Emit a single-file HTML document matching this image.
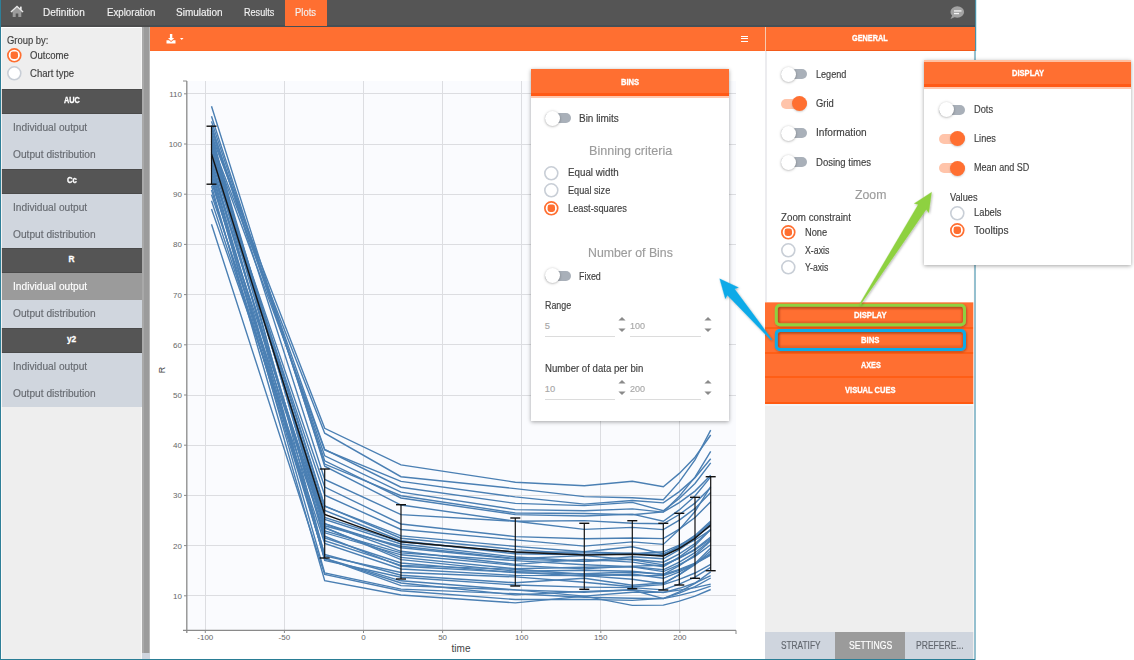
<!DOCTYPE html>
<html><head><meta charset="utf-8"><style>
html,body{margin:0;padding:0;width:1134px;height:660px;overflow:hidden;background:#fff;font-family:"Liberation Sans", sans-serif;}
.r{position:absolute;}
.t{position:absolute;white-space:nowrap;line-height:20px;height:20px;-webkit-text-stroke:0.15px currentColor;}
svg text{font-family:"Liberation Sans",sans-serif;}
</style></head><body>
<div class="r" style="left:0px;top:0px;width:975px;height:660px;background:#fff;"></div>
<div class="r" style="left:0px;top:0px;width:975px;height:27px;background:#555555;"></div>
<div class="r" style="left:0px;top:25px;width:975px;height:2px;background:#4b4c4d;"></div>
<div class="r" style="left:766px;top:25px;width:209px;height:2px;background:#454f55;"></div>
<div class="r" style="left:150px;top:25px;width:615px;height:2px;background:#454f55;"></div>
<div class="r" style="left:285px;top:0px;width:42px;height:26px;background:#ff6f31;"></div>
<svg class="r" style="left:10px;top:5px" width="14" height="13" viewBox="0 0 14 13"><path d="M1.3 7.2 L7 2 L12.7 7.2 L11.3 7.2 L11.3 12 L8.3 12 L8.3 8.6 L5.7 8.6 L5.7 12 L2.7 12 L2.7 7.2 Z" fill="#9c9c9c"/><path d="M0.9 7 L7 1.4 L13.1 7" fill="none" stroke="#e8e8e8" stroke-width="1.3"/><rect x="10" y="1.6" width="1.7" height="3.2" fill="#e8e8e8"/></svg>
<div class="t" style="left:43.40px;top:2.70px;font-size:10.4px;color:#f2f2f2;font-weight:normal;letter-spacing:0.000px;transform:scaleX(0.9641);transform-origin:0 0;">Definition</div>
<div class="t" style="left:106.50px;top:2.70px;font-size:10.4px;color:#f2f2f2;font-weight:normal;letter-spacing:0.000px;transform:scaleX(0.9321);transform-origin:0 0;">Exploration</div>
<div class="t" style="left:176.00px;top:2.70px;font-size:10.4px;color:#f2f2f2;font-weight:normal;letter-spacing:0.000px;transform:scaleX(0.9617);transform-origin:0 0;">Simulation</div>
<div class="t" style="left:243.70px;top:2.70px;font-size:10.4px;color:#f2f2f2;font-weight:normal;letter-spacing:0.000px;transform:scaleX(0.8737);transform-origin:0 0;">Results</div>
<div class="t" style="left:295.00px;top:2.70px;font-size:10.4px;color:#f2f2f2;font-weight:normal;letter-spacing:0.000px;transform:scaleX(0.9083);transform-origin:0 0;">Plots</div>
<svg class="r" style="left:948px;top:4px" width="18" height="17" viewBox="0 0 18 17"><ellipse cx="9.3" cy="8" rx="6.8" ry="5.8" fill="#a3a3a3"/><path d="M4.5 11 L2.5 15 L8 12.5 Z" fill="#a3a3a3"/><rect x="6" y="6.3" width="7.5" height="1.3" fill="#f4f4f4"/><rect x="6" y="8.9" width="5" height="1.3" fill="#f4f4f4"/></svg>
<div class="r" style="left:1px;top:27px;width:141px;height:633px;background:#eeeeee;"></div>
<div class="r" style="left:1px;top:27px;width:141px;height:1px;background:#ffffff;"></div>
<div class="r" style="left:141px;top:27px;width:1px;height:632px;background:#f6f6f6;"></div>
<div class="r" style="left:142px;top:27px;width:8px;height:626px;background:#9b9b9b;"></div>
<div class="r" style="left:142px;top:27px;width:1.5px;height:626px;background:#a9a9a9;"></div>
<div class="r" style="left:149px;top:27px;width:1px;height:626px;background:#b8b8b8;"></div>
<div class="r" style="left:142px;top:653px;width:8px;height:7px;background:#cfd5de;"></div>
<div class="t" style="left:6.80px;top:31.30px;font-size:10px;color:#404040;font-weight:normal;letter-spacing:0.000px;transform:scaleX(0.9428);transform-origin:0 0;">Group by:</div>
<svg class="r" style="left:5.70px;top:46.90px" width="16.60" height="16.60"><circle cx="8.3" cy="8.3" r="6.45" fill="#fff" stroke="#ff6f31" stroke-width="1.7"/><rect x="4.6000000000000005" y="4.6000000000000005" width="7.4" height="7.4" rx="2.4" fill="#ff6f31"/></svg>
<svg class="r" style="left:5.70px;top:64.70px" width="16.60" height="16.60"><circle cx="8.3" cy="8.3" r="6.5" fill="#fff" stroke="#c8ced6" stroke-width="1.6"/></svg>
<div class="t" style="left:30.30px;top:46.10px;font-size:10px;color:#404040;font-weight:normal;letter-spacing:0.000px;transform:scaleX(0.9539);transform-origin:0 0;">Outcome</div>
<div class="t" style="left:30.30px;top:63.90px;font-size:10px;color:#404040;font-weight:normal;letter-spacing:0.000px;transform:scaleX(0.9581);transform-origin:0 0;">Chart type</div>
<div class="r" style="left:1px;top:89.0px;width:141px;height:25px;background:#555555;"></div>
<div class="r" style="left:1px;top:89.0px;width:141px;height:1px;background:#4a4a4a;"></div>
<div class="r" style="left:1px;top:113.0px;width:141px;height:1px;background:#4a4a4a;"></div>
<div class="t" style="left:63.55px;top:90.30px;font-size:8.3px;color:#ffffff;font-weight:bold;letter-spacing:0.000px;transform:scaleX(0.8842);transform-origin:0 0;-webkit-text-stroke:0.3px currentColor;">AUC</div>
<div class="r" style="left:1px;top:114.0px;width:141px;height:27.25px;background:#d0d6de;"></div>
<div class="t" style="left:12.60px;top:118.20px;font-size:10px;color:#666a70;font-weight:normal;letter-spacing:0.000px;transform:scaleX(1.0188);transform-origin:0 0;">Individual output</div>
<div class="r" style="left:1px;top:141.25px;width:141px;height:27.25px;background:#d0d6de;"></div>
<div class="t" style="left:12.60px;top:145.45px;font-size:10px;color:#666a70;font-weight:normal;letter-spacing:0.000px;transform:scaleX(1.0190);transform-origin:0 0;">Output distribution</div>
<div class="r" style="left:1px;top:168.5px;width:141px;height:25px;background:#555555;"></div>
<div class="r" style="left:1px;top:168.5px;width:141px;height:1px;background:#4a4a4a;"></div>
<div class="r" style="left:1px;top:192.5px;width:141px;height:1px;background:#4a4a4a;"></div>
<div class="t" style="left:66.55px;top:169.80px;font-size:8.3px;color:#ffffff;font-weight:bold;letter-spacing:0.000px;transform:scaleX(0.9331);transform-origin:0 0;-webkit-text-stroke:0.3px currentColor;">Cc</div>
<div class="r" style="left:1px;top:193.5px;width:141px;height:27.25px;background:#d0d6de;"></div>
<div class="t" style="left:12.60px;top:197.70px;font-size:10px;color:#666a70;font-weight:normal;letter-spacing:0.000px;transform:scaleX(1.0188);transform-origin:0 0;">Individual output</div>
<div class="r" style="left:1px;top:220.75px;width:141px;height:27.25px;background:#d0d6de;"></div>
<div class="t" style="left:12.60px;top:224.95px;font-size:10px;color:#666a70;font-weight:normal;letter-spacing:0.000px;transform:scaleX(1.0190);transform-origin:0 0;">Output distribution</div>
<div class="r" style="left:1px;top:248.0px;width:141px;height:25px;background:#555555;"></div>
<div class="r" style="left:1px;top:248.0px;width:141px;height:1px;background:#4a4a4a;"></div>
<div class="r" style="left:1px;top:272.0px;width:141px;height:1px;background:#4a4a4a;"></div>
<div class="t" style="left:68.50px;top:249.30px;font-size:8.3px;color:#ffffff;font-weight:bold;letter-spacing:0.000px;-webkit-text-stroke:0.3px currentColor;">R</div>
<div class="r" style="left:1px;top:273.0px;width:141px;height:27.25px;background:#9b9b9b;"></div>
<div class="t" style="left:12.60px;top:277.20px;font-size:10px;color:#ffffff;font-weight:normal;letter-spacing:0.000px;transform:scaleX(1.0188);transform-origin:0 0;">Individual output</div>
<div class="r" style="left:1px;top:300.25px;width:141px;height:27.25px;background:#d0d6de;"></div>
<div class="t" style="left:12.60px;top:304.45px;font-size:10px;color:#666a70;font-weight:normal;letter-spacing:0.000px;transform:scaleX(1.0190);transform-origin:0 0;">Output distribution</div>
<div class="r" style="left:1px;top:327.5px;width:141px;height:25px;background:#555555;"></div>
<div class="r" style="left:1px;top:327.5px;width:141px;height:1px;background:#4a4a4a;"></div>
<div class="r" style="left:1px;top:351.5px;width:141px;height:1px;background:#4a4a4a;"></div>
<div class="t" style="left:66.88px;top:328.80px;font-size:8.3px;color:#ffffff;font-weight:bold;letter-spacing:0.000px;-webkit-text-stroke:0.3px currentColor;">y2</div>
<div class="r" style="left:1px;top:352.5px;width:141px;height:27.25px;background:#d0d6de;"></div>
<div class="t" style="left:12.60px;top:356.70px;font-size:10px;color:#666a70;font-weight:normal;letter-spacing:0.000px;transform:scaleX(1.0188);transform-origin:0 0;">Individual output</div>
<div class="r" style="left:1px;top:379.75px;width:141px;height:27.25px;background:#d0d6de;"></div>
<div class="t" style="left:12.60px;top:383.95px;font-size:10px;color:#666a70;font-weight:normal;letter-spacing:0.000px;transform:scaleX(1.0190);transform-origin:0 0;">Output distribution</div>
<div class="r" style="left:150px;top:27px;width:615px;height:24.5px;background:#ff6f31;"></div>
<div class="r" style="left:150px;top:50px;width:615px;height:1.5px;background:#ff6a28;"></div>
<div class="r" style="left:150px;top:51px;width:615px;height:609px;background:#ffffff;"></div>
<svg class="r" style="left:165px;top:33px" width="22" height="12" viewBox="0 0 22 12"><rect x="4.9" y="1" width="2.4" height="5" fill="#fff"/><path d="M3 5 L9.2 5 L6.1 8 Z" fill="#fff"/><path d="M1.5 7.3 L4 7.3 L6.1 9 L8.2 7.3 L10.5 7.3 L10.5 10.5 L1.5 10.5 Z" fill="#fff"/><path d="M15 5 L18.5 5 L16.75 7 Z" fill="#fff"/></svg>
<div class="r" style="left:740.9px;top:35.5px;width:7.4px;height:1.3px;background:#fff;"></div>
<div class="r" style="left:740.9px;top:38.2px;width:7.4px;height:1.3px;background:#fff;"></div>
<div class="r" style="left:740.9px;top:40.8px;width:7.4px;height:1.3px;background:#fff;"></div>
<div class="r" style="left:765px;top:27px;width:1px;height:24px;background:#f6c9b0;"></div>
<div class="r" style="left:765px;top:51px;width:210px;height:609px;background:#ffffff;"></div>
<div class="r" style="left:766px;top:27px;width:209px;height:22.5px;background:#ff6f31;"></div>
<div class="r" style="left:766px;top:49.5px;width:209px;height:1.8px;background:#f25a1a;"></div>
<div class="t" style="left:852.35px;top:28.30px;font-size:8.3px;color:#ffffff;font-weight:bold;letter-spacing:0.000px;transform:scaleX(0.8797);transform-origin:0 0;-webkit-text-stroke:0.3px currentColor;">GENERAL</div>
<div class="r" style="left:765px;top:51px;width:1.5px;height:251px;background:#ececef;"></div>
<div class="r" style="left:780.5px;top:69.4px;width:26px;height:10px;border-radius:5px;background:#a9b0b9"></div><div class="r" style="left:780.5px;top:66.9px;width:15px;height:15px;border-radius:50%;background:#fff;box-shadow:0 0.5px 2.5px rgba(0,0,0,0.35)"></div>
<div class="t" style="left:815.80px;top:64.70px;font-size:10px;color:#404040;font-weight:normal;letter-spacing:0.000px;transform:scaleX(0.9080);transform-origin:0 0;">Legend</div>
<div class="r" style="left:780.5px;top:98.8px;width:26px;height:10px;border-radius:5px;background:#ffc4aa"></div><div class="r" style="left:791.5px;top:96.3px;width:15px;height:15px;border-radius:50%;background:#ff6f31;box-shadow:0 1px 2px rgba(0,0,0,0.18)"></div>
<div class="t" style="left:815.80px;top:94.10px;font-size:10px;color:#404040;font-weight:normal;letter-spacing:0.000px;transform:scaleX(0.9369);transform-origin:0 0;">Grid</div>
<div class="r" style="left:780.5px;top:128px;width:26px;height:10px;border-radius:5px;background:#a9b0b9"></div><div class="r" style="left:780.5px;top:125.5px;width:15px;height:15px;border-radius:50%;background:#fff;box-shadow:0 0.5px 2.5px rgba(0,0,0,0.35)"></div>
<div class="t" style="left:815.80px;top:123.30px;font-size:10px;color:#404040;font-weight:normal;letter-spacing:0.000px;transform:scaleX(1.0135);transform-origin:0 0;">Information</div>
<div class="r" style="left:780.5px;top:157.3px;width:26px;height:10px;border-radius:5px;background:#a9b0b9"></div><div class="r" style="left:780.5px;top:154.8px;width:15px;height:15px;border-radius:50%;background:#fff;box-shadow:0 0.5px 2.5px rgba(0,0,0,0.35)"></div>
<div class="t" style="left:815.80px;top:152.60px;font-size:10px;color:#404040;font-weight:normal;letter-spacing:0.000px;transform:scaleX(0.9533);transform-origin:0 0;">Dosing times</div>
<div class="t" style="left:854.80px;top:185.20px;font-size:12.4px;color:#9c9c9c;font-weight:normal;letter-spacing:0.000px;transform:scaleX(0.9906);transform-origin:0 0;">Zoom</div>
<div class="t" style="left:781.00px;top:208.10px;font-size:10px;color:#404040;font-weight:normal;letter-spacing:0.000px;transform:scaleX(0.9764);transform-origin:0 0;">Zoom constraint</div>
<svg class="r" style="left:779.70px;top:224.40px" width="16.60" height="16.60"><circle cx="8.3" cy="8.3" r="6.45" fill="#fff" stroke="#ff6f31" stroke-width="1.7"/><rect x="4.6000000000000005" y="4.6000000000000005" width="7.4" height="7.4" rx="2.4" fill="#ff6f31"/></svg>
<div class="t" style="left:804.60px;top:223.00px;font-size:10px;color:#404040;font-weight:normal;letter-spacing:0.000px;transform:scaleX(0.9286);transform-origin:0 0;">None</div>
<svg class="r" style="left:779.70px;top:242.00px" width="16.60" height="16.60"><circle cx="8.3" cy="8.3" r="6.5" fill="#fff" stroke="#c8ced6" stroke-width="1.6"/></svg>
<div class="t" style="left:804.60px;top:240.60px;font-size:10px;color:#404040;font-weight:normal;letter-spacing:0.000px;transform:scaleX(0.8782);transform-origin:0 0;">X-axis</div>
<svg class="r" style="left:779.70px;top:259.40px" width="16.60" height="16.60"><circle cx="8.3" cy="8.3" r="6.5" fill="#fff" stroke="#c8ced6" stroke-width="1.6"/></svg>
<div class="t" style="left:804.60px;top:258.00px;font-size:10px;color:#404040;font-weight:normal;letter-spacing:0.000px;transform:scaleX(0.8673);transform-origin:0 0;">Y-axis</div>
<div class="r" style="left:765px;top:302px;width:210px;height:102.5px;background:#ff6f31;"></div>
<div class="t" style="left:854.10px;top:305.00px;font-size:8.3px;color:#ffffff;font-weight:bold;letter-spacing:0.000px;transform:scaleX(0.9259);transform-origin:0 0;-webkit-text-stroke:0.3px currentColor;">DISPLAY</div>
<div class="t" style="left:861.15px;top:330.00px;font-size:8.3px;color:#ffffff;font-weight:bold;letter-spacing:0.000px;transform:scaleX(0.9329);transform-origin:0 0;-webkit-text-stroke:0.3px currentColor;">BINS</div>
<div class="t" style="left:860.50px;top:354.80px;font-size:8.3px;color:#ffffff;font-weight:bold;letter-spacing:0.000px;transform:scaleX(0.8760);transform-origin:0 0;-webkit-text-stroke:0.3px currentColor;">AXES</div>
<div class="t" style="left:845.10px;top:379.80px;font-size:8.3px;color:#ffffff;font-weight:bold;letter-spacing:0.000px;transform:scaleX(0.9092);transform-origin:0 0;-webkit-text-stroke:0.3px currentColor;">VISUAL CUES</div>
<div class="r" style="left:765px;top:327.0px;width:210px;height:1.8px;background:#ff5e16;"></div>
<div class="r" style="left:765px;top:352.0px;width:210px;height:1.8px;background:#ff5e16;"></div>
<div class="r" style="left:765px;top:376.3px;width:210px;height:1.8px;background:#ff5e16;"></div>
<div class="r" style="left:765px;top:302px;width:210px;height:1.2px;background:#ffa27a;"></div>
<div class="r" style="left:765px;top:402.3px;width:210px;height:2px;background:#ff5a12;"></div>
<div class="r" style="left:765px;top:404.3px;width:210px;height:228px;background:#eeeeee;"></div>
<div class="r" style="left:765px;top:404.3px;width:210px;height:1.3px;background:#f2f6f8;"></div>
<div class="r" style="left:765px;top:632px;width:70px;height:27px;background:#cfd5de;"></div>
<div class="r" style="left:835px;top:632px;width:70px;height:27px;background:#9b9b9b;"></div>
<div class="r" style="left:905px;top:632px;width:69px;height:27px;background:#cfd5de;"></div>
<div class="t" style="left:780.75px;top:635.60px;font-size:10px;color:#62676e;font-weight:normal;letter-spacing:0.000px;transform:scaleX(0.8300);transform-origin:0 0;">STRATIFY</div>
<div class="t" style="left:848.70px;top:635.60px;font-size:10px;color:#ffffff;font-weight:normal;letter-spacing:0.000px;transform:scaleX(0.8639);transform-origin:0 0;">SETTINGS</div>
<div class="t" style="left:915.90px;top:635.60px;font-size:10px;color:#62676e;font-weight:normal;letter-spacing:0.000px;transform:scaleX(0.8566);transform-origin:0 0;">PREFERE...</div>
<div class="r" style="left:0px;top:0px;width:1px;height:660px;background:#2e7f98;"></div>
<div class="r" style="left:1px;top:27px;width:1px;height:632px;background:rgba(255,250,248,0.85);"></div>
<div class="r" style="left:975px;top:0px;width:1px;height:51px;background:#4a8ea3;"></div>
<div class="r" style="left:976px;top:0px;width:1px;height:51px;background:#cfe9f1;"></div>
<div class="r" style="left:974px;top:51px;width:2px;height:609px;background:#95c0cf;"></div>
<div class="r" style="left:973px;top:51px;width:1px;height:608px;background:rgba(255,248,245,0.7);"></div>
<div class="r" style="left:0px;top:659px;width:975px;height:1px;background:#2a7d95;"></div>
<svg class="r" style="left:0;top:0" width="1134" height="660"><rect x="187" y="81" width="549" height="549" fill="#fafbfe"/><line x1="205.5" y1="81" x2="205.5" y2="630" stroke="#dcdde1" stroke-width="1"/><line x1="284.5" y1="81" x2="284.5" y2="630" stroke="#dcdde1" stroke-width="1"/><line x1="363.5" y1="81" x2="363.5" y2="630" stroke="#dcdde1" stroke-width="1"/><line x1="442.5" y1="81" x2="442.5" y2="630" stroke="#dcdde1" stroke-width="1"/><line x1="521.5" y1="81" x2="521.5" y2="630" stroke="#dcdde1" stroke-width="1"/><line x1="600.5" y1="81" x2="600.5" y2="630" stroke="#dcdde1" stroke-width="1"/><line x1="679.5" y1="81" x2="679.5" y2="630" stroke="#dcdde1" stroke-width="1"/><line x1="187" y1="595.5" x2="736" y2="595.5" stroke="#dcdde1" stroke-width="1"/><line x1="187" y1="545.5" x2="736" y2="545.5" stroke="#dcdde1" stroke-width="1"/><line x1="187" y1="495.5" x2="736" y2="495.5" stroke="#dcdde1" stroke-width="1"/><line x1="187" y1="445.5" x2="736" y2="445.5" stroke="#dcdde1" stroke-width="1"/><line x1="187" y1="395.5" x2="736" y2="395.5" stroke="#dcdde1" stroke-width="1"/><line x1="187" y1="344.5" x2="736" y2="344.5" stroke="#dcdde1" stroke-width="1"/><line x1="187" y1="294.5" x2="736" y2="294.5" stroke="#dcdde1" stroke-width="1"/><line x1="187" y1="244.5" x2="736" y2="244.5" stroke="#dcdde1" stroke-width="1"/><line x1="187" y1="194.5" x2="736" y2="194.5" stroke="#dcdde1" stroke-width="1"/><line x1="187" y1="144.5" x2="736" y2="144.5" stroke="#dcdde1" stroke-width="1"/><line x1="187" y1="93.5" x2="736" y2="93.5" stroke="#dcdde1" stroke-width="1"/><polyline points="211.5,135.4 324.7,428.3 401.0,464.9 515.3,482.2 584.3,485.8 632.3,481.3 663.3,486.7 679.3,473.4 695.0,457.2 710.7,435.0" fill="none" stroke="#4a7fb3" stroke-width="1.4"/><polyline points="211.5,142.6 324.7,433.2 401.0,476.7 515.3,488.6 584.3,496.6 632.3,497.7 663.3,499.8 679.3,481.9 695.0,460.0 710.7,430.1" fill="none" stroke="#4a7fb3" stroke-width="1.4"/><polyline points="211.5,144.2 324.7,449.9 401.0,481.4 515.3,496.9 584.3,504.1 632.3,500.5 663.3,502.9 679.3,491.6 695.0,477.7 710.7,458.8" fill="none" stroke="#4a7fb3" stroke-width="1.4"/><polyline points="211.5,128.3 324.7,449.4 401.0,487.2 515.3,503.4 584.3,505.6 632.3,502.4 663.3,510.8 679.3,498.5 695.0,483.5 710.7,462.9" fill="none" stroke="#4a7fb3" stroke-width="1.4"/><polyline points="211.5,131.0 324.7,455.8 401.0,492.1 515.3,509.6 584.3,510.8 632.3,508.9 663.3,512.1 679.3,502.6 695.0,491.1 710.7,475.3" fill="none" stroke="#4a7fb3" stroke-width="1.4"/><polyline points="211.5,116.2 324.7,464.1 401.0,495.7 515.3,513.0 584.3,513.5 632.3,514.7 663.3,511.9 679.3,496.3 695.0,477.2 710.7,451.3" fill="none" stroke="#4a7fb3" stroke-width="1.4"/><polyline points="211.5,121.4 324.7,460.8 401.0,498.0 515.3,514.6 584.3,516.0 632.3,514.1 663.3,521.3 679.3,509.9 695.0,495.9 710.7,476.9" fill="none" stroke="#4a7fb3" stroke-width="1.4"/><polyline points="211.5,106.3 324.7,466.2 401.0,505.0 515.3,521.2 584.3,520.6 632.3,523.3 663.3,523.8 679.3,514.5 695.0,503.1 710.7,487.6" fill="none" stroke="#4a7fb3" stroke-width="1.4"/><polyline points="211.5,125.2 324.7,479.4 401.0,514.6 515.3,521.3 584.3,529.4 632.3,527.4 663.3,529.6 679.3,520.1 695.0,508.4 710.7,492.5" fill="none" stroke="#4a7fb3" stroke-width="1.4"/><polyline points="211.5,155.8 324.7,487.1 401.0,524.0 515.3,536.6 584.3,538.7 632.3,538.0 663.3,538.6 679.3,529.1 695.0,517.5 710.7,501.7" fill="none" stroke="#4a7fb3" stroke-width="1.4"/><polyline points="211.5,153.5 324.7,506.3 401.0,535.9 515.3,546.4 584.3,551.8 632.3,546.8 663.3,553.7 679.3,547.6 695.0,540.0 710.7,529.8" fill="none" stroke="#4a7fb3" stroke-width="1.4"/><polyline points="211.5,145.7 324.7,505.9 401.0,538.2 515.3,549.6 584.3,554.1 632.3,553.7 663.3,551.8 679.3,545.2 695.0,537.0 710.7,526.0" fill="none" stroke="#4a7fb3" stroke-width="1.4"/><polyline points="211.5,160.4 324.7,510.4 401.0,540.7 515.3,553.8 584.3,554.8 632.3,553.3 663.3,556.0 679.3,547.4 695.0,536.8 710.7,522.3" fill="none" stroke="#4a7fb3" stroke-width="1.4"/><polyline points="211.5,148.7 324.7,519.5 401.0,544.0 515.3,557.0 584.3,561.2 632.3,556.8 663.3,558.8 679.3,549.7 695.0,538.6 710.7,523.4" fill="none" stroke="#4a7fb3" stroke-width="1.4"/><polyline points="211.5,137.3 324.7,523.7 401.0,547.7 515.3,559.1 584.3,561.4 632.3,559.3 663.3,562.2 679.3,553.8 695.0,543.5 710.7,529.5" fill="none" stroke="#4a7fb3" stroke-width="1.4"/><polyline points="211.5,182.2 324.7,523.7 401.0,551.3 515.3,564.4 584.3,559.4 632.3,562.1 663.3,566.7 679.3,557.1 695.0,545.4 710.7,529.4" fill="none" stroke="#4a7fb3" stroke-width="1.4"/><polyline points="211.5,209.0 324.7,532.8 401.0,554.8 515.3,565.4 584.3,568.9 632.3,566.1 663.3,565.2 679.3,558.0 695.0,549.2 710.7,537.1" fill="none" stroke="#4a7fb3" stroke-width="1.4"/><polyline points="211.5,140.9 324.7,527.5 401.0,559.6 515.3,571.2 584.3,570.2 632.3,571.3 663.3,574.5 679.3,569.4 695.0,563.1 710.7,554.6" fill="none" stroke="#4a7fb3" stroke-width="1.4"/><polyline points="211.5,162.8 324.7,537.9 401.0,563.0 515.3,572.6 584.3,573.7 632.3,572.0 663.3,574.3 679.3,565.7 695.0,555.2 710.7,540.8" fill="none" stroke="#4a7fb3" stroke-width="1.4"/><polyline points="211.5,150.2 324.7,540.6 401.0,565.4 515.3,569.3 584.3,574.5 632.3,575.6 663.3,575.5 679.3,570.3 695.0,563.9 710.7,555.2" fill="none" stroke="#4a7fb3" stroke-width="1.4"/><polyline points="211.5,200.8 324.7,543.5 401.0,569.0 515.3,575.4 584.3,575.6 632.3,579.2 663.3,583.8 679.3,574.6 695.0,563.4 710.7,548.1" fill="none" stroke="#4a7fb3" stroke-width="1.4"/><polyline points="211.5,133.3 324.7,556.0 401.0,572.5 515.3,576.9 584.3,582.2 632.3,586.8 663.3,584.6 679.3,579.4 695.0,573.0 710.7,564.4" fill="none" stroke="#4a7fb3" stroke-width="1.4"/><polyline points="211.5,151.7 324.7,560.5 401.0,577.2 515.3,585.0 584.3,587.1 632.3,587.6 663.3,589.9 679.3,584.1 695.0,577.1 710.7,567.4" fill="none" stroke="#4a7fb3" stroke-width="1.4"/><polyline points="211.5,178.9 324.7,558.4 401.0,580.8 515.3,589.9 584.3,592.3 632.3,589.7 663.3,592.6 679.3,588.3 695.0,583.0 710.7,575.7" fill="none" stroke="#4a7fb3" stroke-width="1.4"/><polyline points="211.5,190.0 324.7,558.3 401.0,585.6 515.3,589.9 584.3,596.1 632.3,592.2 663.3,592.2 679.3,590.1 695.0,587.6 710.7,584.1" fill="none" stroke="#4a7fb3" stroke-width="1.4"/><polyline points="211.5,175.9 324.7,572.9 401.0,589.1 515.3,593.8 584.3,597.3 632.3,598.2 663.3,598.6 679.3,591.8 695.0,583.3 710.7,571.9" fill="none" stroke="#4a7fb3" stroke-width="1.4"/><polyline points="211.5,185.9 324.7,580.6 401.0,595.0 515.3,602.9 584.3,596.1 632.3,605.4 663.3,605.1 679.3,601.1 695.0,596.2 710.7,589.5" fill="none" stroke="#4a7fb3" stroke-width="1.4"/><polyline points="211.5,158.1 324.7,495.2 401.0,529.5 515.3,539.9 584.3,546.1 632.3,541.9 663.3,544.4 679.3,529.6 695.0,511.5 710.7,486.7" fill="none" stroke="#4a7fb3" stroke-width="1.4"/><polyline points="211.5,194.8 324.7,525.8 401.0,546.3 515.3,558.6 584.3,555.6 632.3,559.7 663.3,564.9 679.3,558.2 695.0,550.0 710.7,538.8" fill="none" stroke="#4a7fb3" stroke-width="1.4"/><polyline points="211.5,139.2 324.7,527.9 401.0,557.4 515.3,568.7 584.3,567.3 632.3,566.7 663.3,571.6 679.3,564.7 695.0,556.3 710.7,544.8" fill="none" stroke="#4a7fb3" stroke-width="1.4"/><polyline points="211.5,165.2 324.7,536.2 401.0,566.3 515.3,572.4 584.3,576.0 632.3,574.0 663.3,578.3 679.3,571.9 695.0,564.0 710.7,553.3" fill="none" stroke="#4a7fb3" stroke-width="1.4"/><polyline points="211.5,170.3 324.7,554.5 401.0,575.2 515.3,582.8 584.3,578.3 632.3,585.3 663.3,583.0 679.3,574.7 695.0,564.6 710.7,550.8" fill="none" stroke="#4a7fb3" stroke-width="1.4"/><polyline points="211.5,173.0 324.7,558.7 401.0,583.0 515.3,594.9 584.3,591.4 632.3,590.0 663.3,598.6 679.3,595.4 695.0,591.4 710.7,586.1" fill="none" stroke="#4a7fb3" stroke-width="1.4"/><polyline points="211.5,224.3 324.7,574.4 401.0,590.8 515.3,599.5 584.3,599.4 632.3,600.4 663.3,598.3 679.3,593.1 695.0,586.7 710.7,578.0" fill="none" stroke="#4a7fb3" stroke-width="1.4"/><polyline points="211.5,147.2 324.7,517.5 401.0,541.8 515.3,552.1 584.3,551.9 632.3,553.5 663.3,554.5 679.3,545.9 695.0,535.4 710.7,521.1" fill="none" stroke="#4a7fb3" stroke-width="1.4"/><polyline points="211.5,167.7 324.7,531.0 401.0,552.9 515.3,560.6 584.3,564.7 632.3,566.6 663.3,569.8 679.3,562.1 695.0,552.7 710.7,540.0" fill="none" stroke="#4a7fb3" stroke-width="1.4"/><polyline points="211.5,154.0 324.7,514.5 401.0,541.8 515.3,552.0 584.3,555.0 632.3,554.3 663.3,556.0 679.3,548.3 695.0,538.3 710.7,525.0" fill="none" stroke="#151515" stroke-width="1.4"/><line x1="211.5" y1="126.2" x2="211.5" y2="184.2" stroke="#111" stroke-width="1.2"/><line x1="206.5" y1="126.2" x2="216.5" y2="126.2" stroke="#111" stroke-width="1.4"/><line x1="206.5" y1="184.2" x2="216.5" y2="184.2" stroke="#111" stroke-width="1.4"/><line x1="324.7" y1="469" x2="324.7" y2="558" stroke="#111" stroke-width="1.2"/><line x1="319.7" y1="469" x2="329.7" y2="469" stroke="#111" stroke-width="1.4"/><line x1="319.7" y1="558" x2="329.7" y2="558" stroke="#111" stroke-width="1.4"/><line x1="401" y1="504.7" x2="401" y2="579" stroke="#111" stroke-width="1.2"/><line x1="396" y1="504.7" x2="406" y2="504.7" stroke="#111" stroke-width="1.4"/><line x1="396" y1="579" x2="406" y2="579" stroke="#111" stroke-width="1.4"/><line x1="515.3" y1="518" x2="515.3" y2="586" stroke="#111" stroke-width="1.2"/><line x1="510.29999999999995" y1="518" x2="520.3" y2="518" stroke="#111" stroke-width="1.4"/><line x1="510.29999999999995" y1="586" x2="520.3" y2="586" stroke="#111" stroke-width="1.4"/><line x1="584.3" y1="523.3" x2="584.3" y2="589.3" stroke="#111" stroke-width="1.2"/><line x1="579.3" y1="523.3" x2="589.3" y2="523.3" stroke="#111" stroke-width="1.4"/><line x1="579.3" y1="589.3" x2="589.3" y2="589.3" stroke="#111" stroke-width="1.4"/><line x1="632.3" y1="520.7" x2="632.3" y2="588.7" stroke="#111" stroke-width="1.2"/><line x1="627.3" y1="520.7" x2="637.3" y2="520.7" stroke="#111" stroke-width="1.4"/><line x1="627.3" y1="588.7" x2="637.3" y2="588.7" stroke="#111" stroke-width="1.4"/><line x1="663.3" y1="523.3" x2="663.3" y2="590" stroke="#111" stroke-width="1.2"/><line x1="658.3" y1="523.3" x2="668.3" y2="523.3" stroke="#111" stroke-width="1.4"/><line x1="658.3" y1="590" x2="668.3" y2="590" stroke="#111" stroke-width="1.4"/><line x1="679.3" y1="513.3" x2="679.3" y2="585" stroke="#111" stroke-width="1.2"/><line x1="674.3" y1="513.3" x2="684.3" y2="513.3" stroke="#111" stroke-width="1.4"/><line x1="674.3" y1="585" x2="684.3" y2="585" stroke="#111" stroke-width="1.4"/><line x1="695" y1="497.3" x2="695" y2="578.3" stroke="#111" stroke-width="1.2"/><line x1="690" y1="497.3" x2="700" y2="497.3" stroke="#111" stroke-width="1.4"/><line x1="690" y1="578.3" x2="700" y2="578.3" stroke="#111" stroke-width="1.4"/><line x1="710.7" y1="476.7" x2="710.7" y2="570.7" stroke="#111" stroke-width="1.2"/><line x1="705.7" y1="476.7" x2="715.7" y2="476.7" stroke="#111" stroke-width="1.4"/><line x1="705.7" y1="570.7" x2="715.7" y2="570.7" stroke="#111" stroke-width="1.4"/><line x1="186.8" y1="81" x2="186.8" y2="633" stroke="#8a8a8a" stroke-width="1.3"/><line x1="183" y1="81" x2="186.8" y2="81" stroke="#8a8a8a" stroke-width="1"/><line x1="183" y1="630.3" x2="736" y2="630.3" stroke="#8a8a8a" stroke-width="1.3"/><line x1="736" y1="630.3" x2="736" y2="634" stroke="#8a8a8a" stroke-width="1"/><line x1="205.3" y1="630" x2="205.3" y2="633" stroke="#8a8a8a" stroke-width="1"/><text x="205.3" y="640" font-size="8" fill="#666" text-anchor="middle">-100</text><line x1="284.4" y1="630" x2="284.4" y2="633" stroke="#8a8a8a" stroke-width="1"/><text x="284.4" y="640" font-size="8" fill="#666" text-anchor="middle">-50</text><line x1="363.5" y1="630" x2="363.5" y2="633" stroke="#8a8a8a" stroke-width="1"/><text x="363.5" y="640" font-size="8" fill="#666" text-anchor="middle">0</text><line x1="442.6" y1="630" x2="442.6" y2="633" stroke="#8a8a8a" stroke-width="1"/><text x="442.6" y="640" font-size="8" fill="#666" text-anchor="middle">50</text><line x1="521.7" y1="630" x2="521.7" y2="633" stroke="#8a8a8a" stroke-width="1"/><text x="521.7" y="640" font-size="8" fill="#666" text-anchor="middle">100</text><line x1="600.8" y1="630" x2="600.8" y2="633" stroke="#8a8a8a" stroke-width="1"/><text x="600.8" y="640" font-size="8" fill="#666" text-anchor="middle">150</text><line x1="679.9" y1="630" x2="679.9" y2="633" stroke="#8a8a8a" stroke-width="1"/><text x="679.9" y="640" font-size="8" fill="#666" text-anchor="middle">200</text><line x1="184" y1="595.8" x2="187" y2="595.8" stroke="#8a8a8a" stroke-width="1"/><text x="182" y="598.7" font-size="8" fill="#666" text-anchor="end">10</text><line x1="184" y1="545.6" x2="187" y2="545.6" stroke="#8a8a8a" stroke-width="1"/><text x="182" y="548.5" font-size="8" fill="#666" text-anchor="end">20</text><line x1="184" y1="495.4" x2="187" y2="495.4" stroke="#8a8a8a" stroke-width="1"/><text x="182" y="498.3" font-size="8" fill="#666" text-anchor="end">30</text><line x1="184" y1="445.2" x2="187" y2="445.2" stroke="#8a8a8a" stroke-width="1"/><text x="182" y="448.1" font-size="8" fill="#666" text-anchor="end">40</text><line x1="184" y1="395.0" x2="187" y2="395.0" stroke="#8a8a8a" stroke-width="1"/><text x="182" y="397.9" font-size="8" fill="#666" text-anchor="end">50</text><line x1="184" y1="344.8" x2="187" y2="344.8" stroke="#8a8a8a" stroke-width="1"/><text x="182" y="347.7" font-size="8" fill="#666" text-anchor="end">60</text><line x1="184" y1="294.6" x2="187" y2="294.6" stroke="#8a8a8a" stroke-width="1"/><text x="182" y="297.5" font-size="8" fill="#666" text-anchor="end">70</text><line x1="184" y1="244.4" x2="187" y2="244.4" stroke="#8a8a8a" stroke-width="1"/><text x="182" y="247.3" font-size="8" fill="#666" text-anchor="end">80</text><line x1="184" y1="194.2" x2="187" y2="194.2" stroke="#8a8a8a" stroke-width="1"/><text x="182" y="197.1" font-size="8" fill="#666" text-anchor="end">90</text><line x1="184" y1="144.0" x2="187" y2="144.0" stroke="#8a8a8a" stroke-width="1"/><text x="182" y="146.9" font-size="8" fill="#666" text-anchor="end">100</text><line x1="184" y1="93.8" x2="187" y2="93.8" stroke="#8a8a8a" stroke-width="1"/><text x="182" y="96.7" font-size="8" fill="#666" text-anchor="end">110</text><text x="461" y="652" font-size="10" fill="#444" text-anchor="middle">time</text><text transform="translate(164.5,370) rotate(-90)" font-size="9" fill="#444" text-anchor="middle">R</text></svg>
<div class="r" style="left:531px;top:68.5px;width:197.5px;height:352.5px;background:#fff;box-shadow:0 1px 4px rgba(0,0,0,0.36)"></div><div class="r" style="left:531px;top:68.5px;width:197.5px;height:25.5px;background:#ff6f31;"></div><div class="r" style="left:531px;top:93.4px;width:197.5px;height:2.3px;background:#ff5a16;"></div><div class="r" style="left:531px;top:95.7px;width:197.5px;height:2px;background:#ffc7ae;"></div><div class="t" style="left:620.90px;top:72.10px;font-size:8.3px;color:#fff;font-weight:bold;letter-spacing:0.000px;transform:scaleX(0.9178);transform-origin:0 0;-webkit-text-stroke:0.3px currentColor;">BINS</div><div class="r" style="left:544.5px;top:113.1px;width:26px;height:10px;border-radius:5px;background:#a9b0b9"></div><div class="r" style="left:544.5px;top:110.6px;width:15px;height:15px;border-radius:50%;background:#fff;box-shadow:0 0.5px 2.5px rgba(0,0,0,0.35)"></div><div class="t" style="left:578.90px;top:109.00px;font-size:10px;color:#404040;font-weight:normal;letter-spacing:0.000px;transform:scaleX(0.9949);transform-origin:0 0;">Bin limits</div><div class="t" style="left:588.55px;top:140.90px;font-size:12.4px;color:#9c9c9c;font-weight:normal;letter-spacing:0.000px;transform:scaleX(1.0156);transform-origin:0 0;">Binning criteria</div><svg class="r" style="left:543.40px;top:164.70px" width="16.60" height="16.60"><circle cx="8.3" cy="8.3" r="6.5" fill="#fff" stroke="#c8ced6" stroke-width="1.6"/></svg><div class="t" style="left:568.10px;top:163.30px;font-size:10px;color:#404040;font-weight:normal;letter-spacing:0.000px;transform:scaleX(0.9787);transform-origin:0 0;">Equal width</div><svg class="r" style="left:543.40px;top:182.30px" width="16.60" height="16.60"><circle cx="8.3" cy="8.3" r="6.5" fill="#fff" stroke="#c8ced6" stroke-width="1.6"/></svg><div class="t" style="left:568.10px;top:180.90px;font-size:10px;color:#404040;font-weight:normal;letter-spacing:0.000px;transform:scaleX(0.9168);transform-origin:0 0;">Equal size</div><svg class="r" style="left:543.40px;top:200.00px" width="16.60" height="16.60"><circle cx="8.3" cy="8.3" r="6.45" fill="#fff" stroke="#ff6f31" stroke-width="1.7"/><rect x="4.6000000000000005" y="4.6000000000000005" width="7.4" height="7.4" rx="2.4" fill="#ff6f31"/></svg><div class="t" style="left:568.10px;top:198.60px;font-size:10px;color:#404040;font-weight:normal;letter-spacing:0.000px;transform:scaleX(0.9279);transform-origin:0 0;">Least-squares</div><div class="t" style="left:587.85px;top:242.70px;font-size:12.4px;color:#9c9c9c;font-weight:normal;letter-spacing:0.000px;transform:scaleX(0.9935);transform-origin:0 0;">Number of Bins</div><div class="r" style="left:544.5px;top:270.7px;width:26px;height:10px;border-radius:5px;background:#a9b0b9"></div><div class="r" style="left:544.5px;top:268.2px;width:15px;height:15px;border-radius:50%;background:#fff;box-shadow:0 0.5px 2.5px rgba(0,0,0,0.35)"></div><div class="t" style="left:579.20px;top:266.50px;font-size:10px;color:#404040;font-weight:normal;letter-spacing:0.000px;transform:scaleX(0.8915);transform-origin:0 0;">Fixed</div><div class="t" style="left:544.70px;top:295.60px;font-size:10px;color:#404040;font-weight:normal;letter-spacing:0.000px;transform:scaleX(0.8891);transform-origin:0 0;">Range</div><div class="t" style="left:544.70px;top:358.60px;font-size:10px;color:#404040;font-weight:normal;letter-spacing:0.000px;transform:scaleX(0.9611);transform-origin:0 0;">Number of data per bin</div><div class="t" style="left:544.70px;top:315.90px;font-size:9.4px;color:#a8a8a8;font-weight:normal;letter-spacing:0.000px;">5</div><div class="t" style="left:630.30px;top:315.90px;font-size:9.4px;color:#a8a8a8;font-weight:normal;letter-spacing:0.000px;transform:scaleX(0.9628);transform-origin:0 0;">100</div><div class="r" style="left:544.7px;top:336.3px;width:70px;height:1px;background:#dcdcdc;"></div><div class="r" style="left:630.3px;top:336.3px;width:70.5px;height:1px;background:#dcdcdc;"></div><svg class="r" style="left:618.4px;top:316.1px" width="8" height="18" viewBox="0 0 8 18"><path d="M0.4 4.5 L4 1 L7.6 4.5 Z" fill="#8a8a8a"/><path d="M0.4 12.5 L4 16 L7.6 12.5 Z" fill="#8a8a8a"/></svg><svg class="r" style="left:703.7px;top:316.1px" width="8" height="18" viewBox="0 0 8 18"><path d="M0.4 4.5 L4 1 L7.6 4.5 Z" fill="#8a8a8a"/><path d="M0.4 12.5 L4 16 L7.6 12.5 Z" fill="#8a8a8a"/></svg><div class="t" style="left:544.70px;top:379.00px;font-size:9.4px;color:#a8a8a8;font-weight:normal;letter-spacing:0.000px;">10</div><div class="t" style="left:630.30px;top:379.00px;font-size:9.4px;color:#a8a8a8;font-weight:normal;letter-spacing:0.000px;transform:scaleX(0.9628);transform-origin:0 0;">200</div><div class="r" style="left:544.7px;top:399.4px;width:70px;height:1px;background:#dcdcdc;"></div><div class="r" style="left:630.3px;top:399.4px;width:70.5px;height:1px;background:#dcdcdc;"></div><svg class="r" style="left:618.4px;top:379.2px" width="8" height="18" viewBox="0 0 8 18"><path d="M0.4 4.5 L4 1 L7.6 4.5 Z" fill="#8a8a8a"/><path d="M0.4 12.5 L4 16 L7.6 12.5 Z" fill="#8a8a8a"/></svg><svg class="r" style="left:703.7px;top:379.2px" width="8" height="18" viewBox="0 0 8 18"><path d="M0.4 4.5 L4 1 L7.6 4.5 Z" fill="#8a8a8a"/><path d="M0.4 12.5 L4 16 L7.6 12.5 Z" fill="#8a8a8a"/></svg><div class="r" style="left:923.5px;top:60px;width:207px;height:205px;background:#fff;box-shadow:0 1px 4px rgba(0,0,0,0.36)"></div><div class="r" style="left:923.5px;top:60px;width:207px;height:24.5px;background:#ff6f31;"></div><div class="r" style="left:923.5px;top:59.8px;width:207px;height:2.3px;background:#ffc0a2;"></div><div class="r" style="left:923.5px;top:84.2px;width:207px;height:2.4px;background:#ff5a16;"></div><div class="r" style="left:923.5px;top:86.6px;width:207px;height:2px;background:#ffc7ae;"></div><div class="t" style="left:1011.95px;top:63.30px;font-size:8.3px;color:#fff;font-weight:bold;letter-spacing:0.000px;transform:scaleX(0.9117);transform-origin:0 0;-webkit-text-stroke:0.3px currentColor;">DISPLAY</div><div class="r" style="left:938.8px;top:104.7px;width:26px;height:10px;border-radius:5px;background:#a9b0b9"></div><div class="r" style="left:938.8px;top:102.2px;width:15px;height:15px;border-radius:50%;background:#fff;box-shadow:0 0.5px 2.5px rgba(0,0,0,0.35)"></div><div class="t" style="left:973.50px;top:100.00px;font-size:10px;color:#404040;font-weight:normal;letter-spacing:0.000px;transform:scaleX(0.9289);transform-origin:0 0;">Dots</div><div class="r" style="left:938.8px;top:133.9px;width:26px;height:10px;border-radius:5px;background:#ffc4aa"></div><div class="r" style="left:949.8px;top:131.4px;width:15px;height:15px;border-radius:50%;background:#ff6f31;box-shadow:0 1px 2px rgba(0,0,0,0.18)"></div><div class="t" style="left:973.50px;top:129.20px;font-size:10px;color:#404040;font-weight:normal;letter-spacing:0.000px;transform:scaleX(0.9161);transform-origin:0 0;">Lines</div><div class="r" style="left:938.8px;top:163.1px;width:26px;height:10px;border-radius:5px;background:#ffc4aa"></div><div class="r" style="left:949.8px;top:160.6px;width:15px;height:15px;border-radius:50%;background:#ff6f31;box-shadow:0 1px 2px rgba(0,0,0,0.18)"></div><div class="t" style="left:973.50px;top:158.40px;font-size:10px;color:#404040;font-weight:normal;letter-spacing:0.000px;transform:scaleX(0.9044);transform-origin:0 0;">Mean and SD</div><div class="t" style="left:950.40px;top:188.30px;font-size:10px;color:#404040;font-weight:normal;letter-spacing:0.000px;transform:scaleX(0.9218);transform-origin:0 0;">Values</div><svg class="r" style="left:949.10px;top:204.60px" width="16.60" height="16.60"><circle cx="8.3" cy="8.3" r="6.5" fill="#fff" stroke="#c8ced6" stroke-width="1.6"/></svg><div class="t" style="left:973.90px;top:203.20px;font-size:10px;color:#404040;font-weight:normal;letter-spacing:0.000px;transform:scaleX(0.9332);transform-origin:0 0;">Labels</div><svg class="r" style="left:949.10px;top:222.20px" width="16.60" height="16.60"><circle cx="8.3" cy="8.3" r="6.45" fill="#fff" stroke="#ff6f31" stroke-width="1.7"/><rect x="4.6000000000000005" y="4.6000000000000005" width="7.4" height="7.4" rx="2.4" fill="#ff6f31"/></svg><div class="t" style="left:973.90px;top:220.80px;font-size:10px;color:#404040;font-weight:normal;letter-spacing:0.000px;transform:scaleX(1.0175);transform-origin:0 0;">Tooltips</div>
<svg class="r" style="left:0;top:0" width="1134" height="660"><defs><filter id="bl"><feGaussianBlur stdDeviation="0.9"/></filter><filter id="sh" x="-30%" y="-30%" width="160%" height="160%"><feDropShadow dx="0.8" dy="1" stdDeviation="1" flood-color="#000" flood-opacity="0.3"/></filter></defs><rect x="778.6" y="307.8" width="184" height="15" fill="none" stroke="rgba(110,30,0,0.35)" stroke-width="1.6" filter="url(#bl)"/><rect x="778.6" y="332.7" width="184" height="14.5" fill="none" stroke="rgba(110,30,0,0.35)" stroke-width="1.6" filter="url(#bl)"/><rect x="776.3" y="305.3" width="188.2" height="19.5" rx="3.5" fill="none" stroke="#8ed140" stroke-width="3" filter="url(#sh)"/><rect x="776.3" y="330.4" width="188.2" height="19" rx="3.5" fill="none" stroke="#0eaae8" stroke-width="3" filter="url(#sh)"/><polygon points="860.51,304.82 926.15,209.48 928.74,212.68 931.60,192.20 914.24,203.43 918.23,204.43 859.49,304.18" fill="#8ed140" stroke="#8ed140" stroke-width="0.3" stroke-linejoin="miter" filter="url(#sh)"/><polygon points="771.96,339.41 734.61,289.10 738.42,287.56 719.70,278.80 725.31,298.70 727.44,295.18 771.04,340.19" fill="#0eaae8" stroke="#0eaae8" stroke-width="0.3" stroke-linejoin="miter" filter="url(#sh)"/></svg>
</body></html>
